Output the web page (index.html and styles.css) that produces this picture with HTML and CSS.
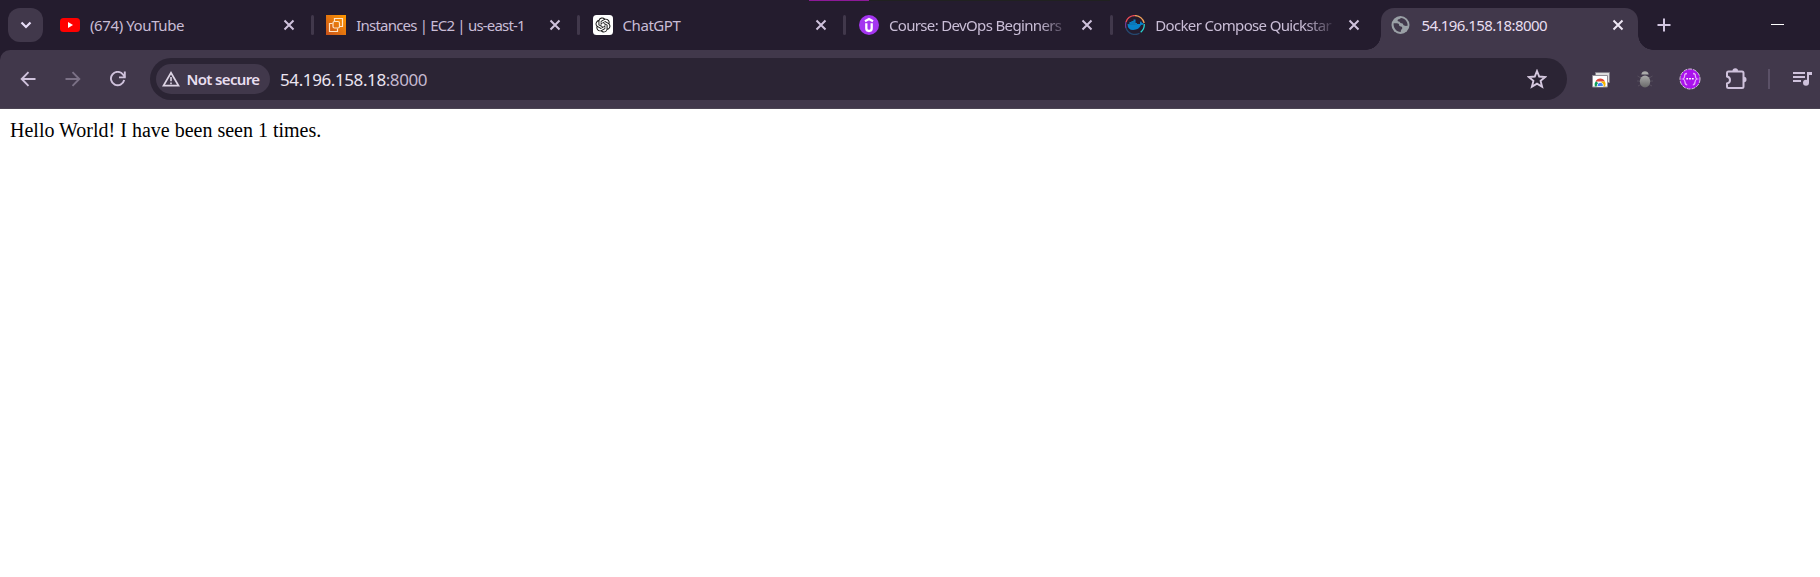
FILE: index.html
```html
<!DOCTYPE html>
<html lang="en">
<head>
<meta charset="utf-8">
<title>54.196.158.18:8000</title>
<link rel="stylesheet" href="styles.css">
</head>
<body>
<header class="browser">
  <div class="progress"></div>
  <div class="tabstrip">
    <button class="tab-search" aria-label="Search tabs"><svg width="12" height="8" viewBox="0 0 12 8"><path d="M1.5 1.5 6 6l4.500-4.500" fill="none" stroke="#e8def8" stroke-width="2.200"/></svg></button>
    <div class="tab">
      <svg class="favicon" viewBox="0 0 20 20"><rect y="3" width="20" height="14" rx="3.500" fill="#f00"/><path d="M8 7v6l5-3z" fill="#fff"/></svg>
      <span class="title youtube">(674) YouTube</span>
      <svg class="close" viewBox="0 0 12 12"><path d="m1.500 1.500 9 9m0-9-9 9"/></svg>
    </div>
    <div class="tab">
      <svg class="favicon" viewBox="0 0 20 20"><defs><linearGradient id="aws" x1="0" y1="1" x2="1" y2="0"><stop stop-color="#c8511b"/><stop offset="1" stop-color="#f90"/></linearGradient></defs><path fill="url(#aws)" d="M0 0h20v20H0z"/><g fill="none" stroke="#ffe5c8" stroke-width="1.200"><rect x="7" y="6.500" width="6.500" height="6.500" rx="1.500"/><path d="M8.500 6V3.500h8v8H14M6.500 8.500h-3v8h8v-3"/></g></svg>
      <span class="title instances">Instances | EC2 | us-east-1</span>
      <svg class="close" viewBox="0 0 12 12"><path d="m1.500 1.500 9 9m0-9-9 9"/></svg>
    </div>
    <div class="tab">
      <svg class="favicon" viewBox="0 0 20 20"><rect width="20" height="20" rx="3.500" fill="#fff"/><path transform="translate(2.500 2.500) scale(.625)" fill="#111" d="M22.2819 9.8211a5.9847 5.9847 0 0 0-.5157-4.9108 6.0462 6.0462 0 0 0-6.5098-2.9A6.0651 6.0651 0 0 0 4.9807 4.1818a5.9847 5.9847 0 0 0-3.9977 2.9 6.0462 6.0462 0 0 0 .7427 7.0966 5.98 5.98 0 0 0 .511 4.9107 6.051 6.051 0 0 0 6.5146 2.9001A5.9847 5.9847 0 0 0 13.2599 24a6.0557 6.0557 0 0 0 5.7718-4.2058 5.9894 5.9894 0 0 0 3.9977-2.9001 6.0557 6.0557 0 0 0-.7475-7.0729zm-9.022 12.6081a4.4755 4.4755 0 0 1-2.8764-1.0408l.1419-.0804 4.7783-2.7582a.7948.7948 0 0 0 .3927-.6813v-6.7369l2.02 1.1686a.071.071 0 0 1 .038.052v5.5826a4.504 4.504 0 0 1-4.4945 4.4944zm-9.6607-4.1254a4.4708 4.4708 0 0 1-.5346-3.0137l.142.0852 4.783 2.7582a.7712.7712 0 0 0 .7806 0l5.8428-3.3685v2.3324a.0804.0804 0 0 1-.0332.0615L9.74 19.9502a4.4992 4.4992 0 0 1-6.1408-1.6464zM2.3408 7.8956a4.485 4.485 0 0 1 2.3655-1.9728V11.6a.7664.7664 0 0 0 .3879.6765l5.8144 3.3543-2.0201 1.1685a.0757.0757 0 0 1-.071 0l-4.8303-2.7865A4.504 4.504 0 0 1 2.3408 7.872zm16.5963 3.8558L13.1038 8.364 15.1192 7.2a.0757.0757 0 0 1 .071 0l4.8303 2.7913a4.4944 4.4944 0 0 1-.6765 8.1042v-5.6772a.79.79 0 0 0-.407-.667zm2.0107-3.0231l-.142-.0852-4.7735-2.7818a.7759.7759 0 0 0-.7854 0L9.409 9.2297V6.8974a.0662.0662 0 0 1 .0284-.0615l4.8303-2.7866a4.4992 4.4992 0 0 1 6.6802 4.66zM8.3065 12.863l-2.02-1.1638a.0804.0804 0 0 1-.038-.0567V6.0742a4.4992 4.4992 0 0 1 7.3757-3.4537l-.142.0805L8.704 5.459a.7948.7948 0 0 0-.3927.6813zm1.0976-2.3654l2.602-1.4998 2.6069 1.4998v2.9994l-2.5974 1.4997-2.6067-1.4997Z"/></svg>
      <span class="title chatgpt">ChatGPT</span>
      <svg class="close" viewBox="0 0 12 12"><path d="m1.500 1.500 9 9m0-9-9 9"/></svg>
    </div>
    <div class="tab">
      <svg class="favicon" viewBox="0 0 20 20"><circle cx="10" cy="10" r="10" fill="#a435f0"/><path d="M6 6.200 10 4l4 2.200M7.300 8.300v5q0 2.700 2.700 2.700t2.700-2.700v-5" fill="none" stroke="#fff" stroke-width="2.300"/></svg>
      <span class="title course">Course: DevOps Beginners</span>
      <svg class="close" viewBox="0 0 12 12"><path d="m1.500 1.500 9 9m0-9-9 9"/></svg>
    </div>
    <div class="tab">
      <svg class="favicon" viewBox="0 0 20 20"><g fill="none" stroke-width="1.300"><path d="M1 13A9.400 9.400 0 0 1 1 7" stroke="#713b91"/><path d="M1 7a9.400 9.400 0 0 1 9-6.400" stroke="#ed4b58"/><path d="M10 .6A9.400 9.400 0 0 1 19.200 8" stroke="#f1a05a"/><path d="M19.200 9a9.400 9.400 0 0 1-3.500 8.200" stroke="#28d5d3"/><path d="M14.500 18.300A9.400 9.400 0 0 1 1 13" stroke="#25476e"/></g><path d="M2.500 9h2V7h2V6h2V4.500h2V8H12v1h3q-.3-1.700.6-2.700 1 .7 1.300 1.700 1-.2 1.900.4-.6 1.600-2.800 1.700Q14 15 8.200 15 2.700 15 2.500 9" fill="#0883c9"/><path d="M3 9.300h9M6.500 7.300h4M5 7.500V10m2-3.500V10m2-4.500V10" stroke="#16649a" stroke-width=".4"/></svg>
      <span class="title docker">Docker Compose Quickstar</span>
      <svg class="close" viewBox="0 0 12 12"><path d="m1.500 1.500 9 9m0-9-9 9"/></svg>
    </div>
    <div class="tab active">
      <svg class="favicon" viewBox="0 0 20 20"><circle cx="9.500" cy="10" r="9" fill="#9aa0a6"/><path d="M2.600 8.200h3.200c1.700 0 2.400.9 2.400 2.100 0 .8.500 1.100 1.600 1.100 1.600 0 2 2.100.9 2.800-.8.500-.8 1-1 2.700-4.300-.1-7.600-4-7.100-8.700zM10 2.900c-1 .5-1.200 1.200-2.400 1.300-1.600.2-1.300 2.300.4 2.400 1 .1.700 1.600 2 1.600 1.500 0 1.900.2 2.200 1.300.4 1.500 2.500 1.600 4.400 1.300.4-4-2.700-7.700-6.600-7.900z" fill="#41384b"/></svg>
      <span class="title local">54.196.158.18:8000</span>
      <svg class="close" viewBox="0 0 12 12"><path d="m1.500 1.500 9 9m0-9-9 9"/></svg>
    </div>
    <svg class="new-tab" viewBox="0 0 14 14"><path d="M7 .5v13M.5 7h13" stroke="#d2c5e0" stroke-width="2"/></svg>
    <div class="minimize"></div>
  </div>
  <nav class="toolbar">
    <div class="navigation">
      <svg width="16" height="16" viewBox="0 0 16 16"><path d="M15.500 8H2m6.500-6.800L1.700 8l6.800 6.800" fill="none" stroke="#cfc2dc" stroke-width="1.900"/></svg>
      <svg width="16" height="16" viewBox="0 0 16 16"><path d="M.5 8H14M7.500 1.200 14.300 8l-6.800 6.800" fill="none" stroke="#7b7186" stroke-width="1.900"/></svg>
      <svg width="16" height="16" viewBox="0 0 16 16"><path d="M14.200 9A6.700 6.700 0 1 1 13 3.500L14.800 6" fill="none" stroke="#cfc2dc" stroke-width="1.900"/><path d="M14.800.4v6H9" fill="none" stroke="#cfc2dc" stroke-width="1.900"/></svg>
    </div>
    <div class="omnibox">
      <div class="security">
        <svg width="18" height="16" viewBox="0 0 18 16"><path d="m9 1.700 7.600 13H1.400z" fill="none" stroke="#ddd4e4" stroke-width="1.700"/><path d="M9 6v4.300m0 1.200v1.700" stroke="#ddd4e4" stroke-width="1.600"/></svg>
        <span class="warning">Not secure</span>
      </div>
      <span class="url">54.196.158.18<span class="port">:8000</span></span>
      <svg class="star" viewBox="0 0 20 20"><path d="m10 2 2.200 5.500 6 .5-4.600 3.900 1.500 5.900-5.100-3.200-5.100 3.200 1.500-5.900L1.800 8l6-.5z" fill="none" stroke="#d5c8df" stroke-width="1.900"/></svg>
    </div>
    <div class="extensions">
      <svg width="20" height="20" viewBox="0 0 20 20"><path d="M4.500 3.500h14v10h-14z" fill="#ddd" stroke="#85818a"/><path d="M1.500 6.500h15v11.500h-15z" fill="#fff" stroke="#918d95"/><path d="M4 17.500a5.300 5.300 0 0 1 1.200-5.600L9 16.500z" fill="#0f9d58"/><path d="M4.500 12.500A5.300 5.300 0 0 1 14 12.500z" fill="#db4437"/><path d="M10 12.500h4q1.200 2.600.1 5H9z" fill="#f4b400"/><path d="M6.500 17.500a3 3 0 1 1 5.600 0z" fill="#4285f4" stroke="#fff" stroke-width=".8"/></svg>
      <svg width="20" height="20" viewBox="0 0 20 20"><defs><linearGradient id="bug" x2="0" y2="1"><stop stop-color="#aaa"/><stop offset="1" stop-color="#686868"/></linearGradient></defs><path d="M2.500 7 6 9m11.500-2L14 9M2 12h16M3 17l4-2m10 2-4-2" stroke="#554d5d"/><path d="M6.300 5.500C6.500 1 13.500 1 13.700 5.500z" fill="#aaa"/><ellipse cx="10" cy="12.600" rx="5.200" ry="6" fill="url(#bug)"/></svg>
      <svg width="22" height="22" viewBox="0 0 22 22"><circle cx="11" cy="11" r="10" fill="#aa13ec" stroke="#d6c3df" stroke-width="1" stroke-dasharray="4 1"/><path d="M8 5.500C3.500 5.500 7.500 10 4 11c3.500 1 .5 5.800 4.200 5.800M14 5.500c4.500 0 .5 4.500 4 5.500-3.500 1-.5 5.800-4.200 5.800" fill="none" stroke="#e5a6fa" stroke-width="1.300"/><path d="M7.300 10.700h1.800m1 0h1.800m1 0h1.800" stroke="#fff" stroke-width="1.600"/></svg>
      <svg width="22" height="22" viewBox="0 0 22 22"><path d="M2 5Q2 3.500 3.500 3.500h13.500q1.500 0 1.500 1.500v13.500q0 1.500-1.500 1.500H3.500Q2 20 2 18.500V15.500Q5 14.800 5 12 5 9.200 2 8.500z" fill="none" stroke="#cfc2dc" stroke-width="2"/><path d="M7.500 3q0-2.700 2.800-2.700T13 3zM19 8.700q2.500 0 2.500 2.800T19 14.300z" fill="#cfc2dc"/></svg>
    </div>
    <div class="divider"></div>
    <svg class="media" width="20" height="16" viewBox="0 0 20 16"><path d="M0 2h12M0 6h12M0 10h8" stroke="#cfc2dc" stroke-width="2"/><path d="M14 1h5v3h-3v8H14z" fill="#cfc2dc"/><circle cx="13" cy="11.800" r="3" fill="#cfc2dc"/></svg>
  </nav>
</header>
<main>Hello World! I have been seen 1 times.</main>
</body>
</html>
```

FILE: styles.css
```css
* { box-sizing: border-box; }
body { margin: 0; background: #fff; overflow: hidden; font-family: "Noto Sans", "Open Sans", sans-serif; }
svg { display: block; flex: none; }
.browser { position: relative; height: 109px; background: #241c2e; }
.progress { position: absolute; top: 0; left: 809px; width: 301px; height: 1px; background: linear-gradient(90deg, #8d1998 60px, #202120 60px); }
.tabstrip { display: flex; height: 50px; padding-left: 8px; }
.tab-search { display: flex; align-items: center; justify-content: center; width: 35px; height: 34px; margin: 8px 3px 0 0; padding: 0; border: 0; border-radius: 12px; background: #41384b; flex: none; }
.tab { position: relative; display: flex; align-items: center; flex: none; width: 266.300px; padding-left: 14px; color: #c9bdd6; }
.tab:not(.active)::after { content: ""; position: absolute; right: -1.500px; top: 15px; width: 3px; height: 20px; border-radius: 2px; background: #41384b; }
.tab:nth-child(6)::after { display: none; }
.favicon { width: 20px; height: 20px; }
.title { width: 178px; margin-left: 10px; overflow: hidden; white-space: nowrap; font-size: 15px; line-height: 22px; }
.close { width: 12px; height: 12px; margin-left: 14.500px; }
.close path { stroke: #cfc2dc; stroke-width: 2; }
.youtube { letter-spacing: -.4px; }
.instances { letter-spacing: -.8px; }
.chatgpt { letter-spacing: -.45px; }
.course, .docker { letter-spacing: -.65px; -webkit-mask-image: linear-gradient(90deg, #000 150px, transparent 182px); mask-image: linear-gradient(90deg, #000 150px, transparent 182px); }
.local { width: 176.500px; letter-spacing: -.6px; }
.active { z-index: 1; color: #e8def0; }
.active .close path { stroke: #eee7f4; }
.active::before { content: ""; position: absolute; z-index: -1; left: 3.500px; right: 5.500px; top: 7.500px; bottom: 0; border-radius: 13px 13px 0 0; background: #41384b; }
.active::after { content: ""; position: absolute; z-index: -1; left: -11.500px; right: -9.500px; bottom: 0; height: 15px; background: radial-gradient(circle at 0 0, transparent 14.500px, #41384b 15px) left / 15px 15px no-repeat, radial-gradient(circle at 100% 0, transparent 14.500px, #41384b 15px) right / 15px 15px no-repeat; }
.new-tab { width: 14px; height: 14px; margin: 18px 0 0 13.200px; }
.minimize { width: 13px; height: 1px; margin: 24px 36px 0 auto; background: #fff; }
.toolbar { display: flex; align-items: center; height: 59px; padding-left: 20px; background: #41384b; border-radius: 10px 0 0; border-bottom: 1px solid #4b4453; }
.navigation { display: flex; gap: 29px; width: 130px; flex: none; }
.omnibox { display: flex; align-items: center; width: 1417px; height: 42px; padding: 0 20px 0 6px; border-radius: 21px; background: #2b2434; flex: none; }
.security { display: flex; align-items: center; width: 114px; height: 30px; padding-left: 6px; border-radius: 15px; background: #41384b; }
.warning { margin-left: 6.500px; color: #e8deef; font-size: 15px; font-weight: 600; line-height: 20px; letter-spacing: -.65px; white-space: nowrap; }
.url { margin-left: 10px; padding-top: 1px; color: #ece5f1; font-size: 17px; line-height: 24px; letter-spacing: -.4px; }
.port { color: #c5b9d0; }
.star { width: 20px; height: 20px; margin-left: auto; }
.extensions { display: flex; align-items: center; gap: 24.300px; margin-left: 23.500px; }
.divider { width: 2px; height: 20px; margin-left: 20.500px; background: #5b5167; flex: none; }
.media { margin-left: 23px; }
main { padding: 10px; font: 20px/23px "Liberation Serif", serif; color: #000; }
```
